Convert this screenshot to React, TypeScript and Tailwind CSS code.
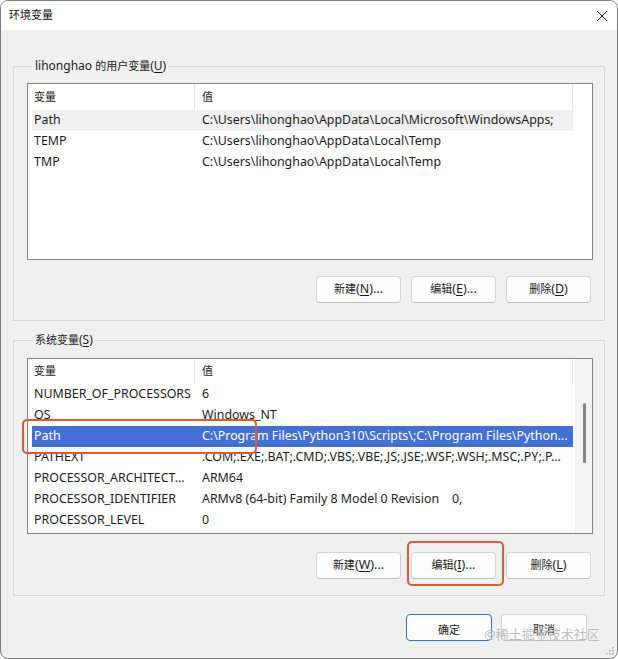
const FONT = { fontFamily: '"Noto Sans", "Noto Sans CJK SC", sans-serif' };

type Row = [string, string];

const userVars: Row[] = [
  ["Path", "C:\\Users\\lihonghao\\AppData\\Local\\Microsoft\\WindowsApps;"],
  ["TEMP", "C:\\Users\\lihonghao\\AppData\\Local\\Temp"],
  ["TMP", "C:\\Users\\lihonghao\\AppData\\Local\\Temp"],
];

const systemVars: Row[] = [
  ["NUMBER_OF_PROCESSORS", "6"],
  ["OS", "Windows_NT"],
  ["Path", "C:\\Program Files\\Python310\\Scripts\\;C:\\Program Files\\Python..."],
  ["PATHEXT", ".COM;.EXE;.BAT;.CMD;.VBS;.VBE;.JS;.JSE;.WSF;.WSH;.MSC;.PY;.P..."],
  ["PROCESSOR_ARCHITECT...", "ARM64"],
  ["PROCESSOR_IDENTIFIER", "ARMv8 (64-bit) Family 8 Model 0 Revision\u00a0\u00a0\u00a0 0,"],
  ["PROCESSOR_LEVEL", "0"],
];

// YaHei UI draws Han glyphs smaller than its Latin ones
function Cjk({ children }: { children: string }) {
  return <span className="text-[11px]">{children}</span>;
}

function Btn({ label, keyChar, suffix = "" }: { label: string; keyChar: string; suffix?: string }) {
  return (
    <button className="h-[27px] w-[85px] rounded-[4px] border border-[#d3d3d3] border-b-[#bdbdbd] bg-[#fdfdfd] text-[12.5px] text-[#1b1b1b]">
      <Cjk>{label}</Cjk>(<span className="underline underline-offset-2">{keyChar}</span>){suffix}
    </button>
  );
}

function VarList({
  rows,
  headerH,
  hoverRow,
  selectedRow,
  scrollbar,
  height,
}: {
  rows: Row[];
  headerH: string;
  hoverRow?: number;
  selectedRow?: number;
  scrollbar?: boolean;
  height: string;
}) {
  return (
    <div className={`flex overflow-hidden border border-[#828282] bg-white ${height}`}>
      <div className="w-[546px] shrink-0 pl-[4px]">
        <div className={`flex w-[541px] text-[#1b1b1b] ${headerH} border-r border-[#e5e5e5]`}>
          <div className="flex w-[163px] items-center border-r border-[#e5e5e5] pl-[2px]">
            <Cjk>变量</Cjk>
          </div>
          <div className="flex items-center pl-[7px]">
            <Cjk>值</Cjk>
          </div>
        </div>
        {rows.map(([name, value], i) => {
          const sel = i === selectedRow;
          const hov = i === hoverRow;
          return (
            <div
              key={name + i}
              className={`flex h-[21px] w-[541px] items-center whitespace-nowrap text-[12.4px] ${
                sel ? "bg-[#4470d4] text-white" : hov ? "bg-[#f0f0f0] text-[#1b1b1b]" : "text-[#1b1b1b]"
              }`}
            >
              <div className="w-[163px] shrink-0 overflow-hidden pl-[2px]">{name}</div>
              <div className="overflow-hidden pl-[7px]">{value}</div>
            </div>
          );
        })}
      </div>
      {scrollbar && (
        <div className="flex w-[18px] shrink-0 justify-center border-l border-white bg-[#f3f3f3] pt-[44px]">
          <div className="ml-[2px] h-[60px] w-[3px] rounded-full bg-[#858585]" />
        </div>
      )}
    </div>
  );
}

export default function App() {
  return (
    <div
      className="relative flex h-[659px] w-[618px] flex-col overflow-hidden rounded-[8px] border border-[#7c7c7c] bg-[#f0f0f0]"
      style={FONT}
    >
      {/* Title bar */}
      <div className="flex h-[29px] shrink-0 items-center justify-between bg-white pl-[8px] pr-[9px]">
        <span className="text-[11px] text-[#111]">环境变量</span>
        <svg width="12" height="12" viewBox="0 0 12 12">
          <path d="M1 1 L11 11 M11 1 L1 11" stroke="#222" strokeWidth="1" />
        </svg>
      </div>

      <div className="flex flex-col px-[12px]">
        {/* User variables */}
        <fieldset className="mt-[27px] border border-[#d6d6d6] pb-[17px] pl-[13px] pr-[11px]">
          <legend className="ml-[6px] px-[2px] text-[12px] leading-[18px] text-[#1b1b1b]">
            lihonghao <Cjk>的用户变量</Cjk>(<span className="underline underline-offset-2">U</span>)
          </legend>
          <div className="mt-[8px]">
            <VarList rows={userVars} headerH="h-[26px]" hoverRow={0} height="h-[177px]" />
          </div>
          <div className="mt-[16px] flex justify-end gap-[10px] pr-[2px]">
            <Btn label="新建" keyChar="N" suffix="..." />
            <Btn label="编辑" keyChar="E" suffix="..." />
            <Btn label="删除" keyChar="D" />
          </div>
        </fieldset>

        {/* System variables */}
        <fieldset className="mt-[10px] border border-[#d6d6d6] pb-[16px] pl-[13px] pr-[11px]">
          <legend className="ml-[6px] px-[2px] text-[12px] leading-[18px] text-[#1b1b1b]">
            <Cjk>系统变量</Cjk>(<span className="underline underline-offset-2">S</span>)
          </legend>
          <div className="mt-[9px]">
            <VarList
              rows={systemVars}
              headerH="h-[25px]"
              selectedRow={2}
              scrollbar
              height="h-[176px]"
            />
          </div>
          <div className="mt-[18px] flex justify-end gap-[10px] pr-[2px]">
            <Btn label="新建" keyChar="W" suffix="..." />
            <Btn label="编辑" keyChar="I" suffix="..." />
            <Btn label="删除" keyChar="L" />
          </div>
        </fieldset>

        {/* OK / Cancel */}
        <div className="mt-[18px] flex justify-end gap-[9px] pr-[18px]">
          <button className="h-[27px] w-[86px] rounded-[4px] border border-[#3a6cc9] bg-[#fdfdfd] text-[#1b1b1b]">
            <Cjk>确定</Cjk>
          </button>
          <button className="h-[27px] w-[86px] rounded-[4px] border border-[#d3d3d3] border-b-[#bdbdbd] bg-[#fdfdfd] text-[#1b1b1b]">
            <Cjk>取消</Cjk>
          </button>
        </div>
      </div>

      {/* Annotations */}
      <div className="pointer-events-none absolute left-[21px] top-[418px] h-[35px] w-[235px] rounded-[5px] border-[2.5px] border-[#e4582f]" />
      <div className="pointer-events-none absolute left-[406px] top-[540px] h-[45px] w-[97px] rounded-[5px] border-[2.5px] border-[#e4582f]" />

      {/* Watermark */}
      <div className="pointer-events-none absolute left-[483px] top-[624px] text-[13px] text-[rgba(150,150,150,0.65)] [text-shadow:0_0_1px_rgba(255,255,255,0.8)]">
        @稀土掘金技术社区
      </div>

      {/* Resize grip */}
      <svg className="absolute bottom-[2px] right-[2px]" width="10" height="10" viewBox="0 0 10 10">
        <rect x="7" y="1" width="1.5" height="1.5" fill="#a0a0a0" />
        <rect x="4" y="4" width="1.5" height="1.5" fill="#a0a0a0" />
        <rect x="7" y="4" width="1.5" height="1.5" fill="#a0a0a0" />
        <rect x="1" y="7" width="1.5" height="1.5" fill="#a0a0a0" />
        <rect x="4" y="7" width="1.5" height="1.5" fill="#a0a0a0" />
        <rect x="7" y="7" width="1.5" height="1.5" fill="#a0a0a0" />
      </svg>
    </div>
  );
}
